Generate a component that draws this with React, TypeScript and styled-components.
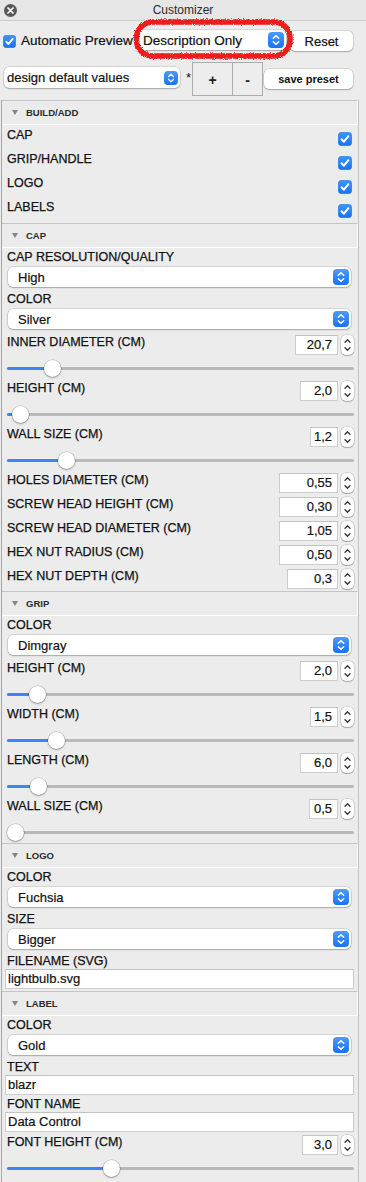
import React from 'react';
import styled, { createGlobalStyle } from 'styled-components';

const GlobalStyle = createGlobalStyle`
  * { box-sizing: border-box; }
  html, body { margin: 0; padding: 0; background: #ececec; }
  body {
    font-family: "Liberation Sans", Arial, sans-serif;
    color: #111;
  }
`;

const Window = styled.div`
  width: 366px;
  height: 1182px;
  display: flex;
  flex-direction: column;
  overflow: hidden;
  background: #ececec;
`;

const TitleBar = styled.div`
  flex: none;
  height: 21px;
  display: grid;
  grid-template-columns: 20px 1fr 20px;
  align-items: center;
  background: #e6e6e6;
  border-bottom: 1px solid #cdcdcd;
`;

const CloseButton = styled.div`
  width: 13px;
  height: 13px;
  margin-left: 3.5px;
  border-radius: 50%;
  background: #585858;
  display: flex;
  align-items: center;
  justify-content: center;
`;

const Title = styled.div`
  text-align: center;
  font-size: 12px;
  color: #2b2b2b;
`;

const Toolbar = styled.div`
  position: relative;
  flex: none;
  display: flex;
  flex-direction: column;
  gap: 11px;
  padding: 9px 13px 4px 3px;
`;

const ToolRow = styled.div<{ $h: number }>`
  display: flex;
  align-items: flex-start;
  height: ${p => p.$h}px;
`;

const ToolLabel = styled.span`
  margin-left: 5px;
  font-size: 13.5px;
  line-height: 21px;
  white-space: nowrap;
  -webkit-text-stroke: 0.2px #111;
`;

const Popup = styled.div<{ $w?: number; $h?: number; $pl?: number; $fs?: number; $mt?: number; $ml?: string }>`
  display: flex;
  align-items: center;
  justify-content: space-between;
  ${p => (p.$w ? `width: ${p.$w}px; flex: none;` : '')}
  height: ${p => p.$h ?? 20}px;
  margin-top: ${p => p.$mt ?? 0}px;
  margin-left: ${p => p.$ml ?? '0'};
  padding: 0 2.5px 0 ${p => p.$pl ?? 10}px;
  background: #fff;
  border-radius: 5px;
  box-shadow: 0 0 0 0.5px rgba(0, 0, 0, 0.2), 0 1px 1.5px rgba(0, 0, 0, 0.22);
  font-size: ${p => p.$fs ?? 13}px;
  white-space: nowrap;
  -webkit-text-stroke: 0.2px #111;
`;

const ChevronBox = styled.span<{ $s: number }>`
  flex: none;
  width: ${p => p.$s}px;
  height: ${p => p.$s}px;
  border-radius: 4px;
  background: linear-gradient(#4b9cfb, #1a72f0);
  display: flex;
  align-items: center;
  justify-content: center;
`;

const PushButton = styled.div<{ $w: number; $mt: number; $ml: number; $fs: number; $bold?: boolean }>`
  flex: none;
  width: ${p => p.$w}px;
  height: 20px;
  margin-top: ${p => p.$mt}px;
  margin-left: ${p => p.$ml}px;
  display: flex;
  align-items: center;
  justify-content: center;
  background: #fff;
  border-radius: 5px;
  box-shadow: 0 0 0 0.5px rgba(0, 0, 0, 0.2), 0 1px 1.5px rgba(0, 0, 0, 0.22);
  font-size: ${p => p.$fs}px;
  font-weight: ${p => (p.$bold ? 700 : 400)};
  -webkit-text-stroke: ${p => (p.$bold ? '0' : '0.2px #111')};
`;

const Star = styled.span`
  flex: none;
  width: 6px;
  margin: 9px 0 0 6px;
  font-size: 13px;
  line-height: 13px;
`;

const SegmentBox = styled.div`
  flex: none;
  width: 71px;
  height: 34px;
  display: grid;
  grid-template-columns: 39px 1fr;
  border: 1px solid #adadad;
  background: #ededed;
`;

const SegmentCell = styled.div<{ $divider?: boolean }>`
  display: flex;
  align-items: center;
  justify-content: center;
  padding-top: 2px;
  font-size: 14px;
  font-weight: 700;
  color: #222;
  border-left: ${p => (p.$divider ? '1px solid #adadad' : 'none')};
`;

const Scribble = styled.svg`
  position: absolute;
  left: 128px;
  top: -6px;
  overflow: visible;
  pointer-events: none;
`;

const ScrollArea = styled.div`
  flex: 1;
  margin: 0 7px 0 1px;
  border-left: 1px solid #a5a5a5;
  border-right: 1px solid #c2c2c2;
  overflow: hidden;
`;

const SectionHeader = styled.div`
  height: 25px;
  display: flex;
  align-items: center;
  padding-left: 10px;
  background: #ebebeb;
  border-top: 1px solid #c4c4c4;
  border-bottom: 1px solid #fff;
  border-right: 1px solid #fff;
`;

const Disclosure = styled.span`
  width: 0;
  height: 0;
  border-left: 3.5px solid transparent;
  border-right: 3.5px solid transparent;
  border-top: 5px solid #858585;
`;

const SectionTitle = styled.span`
  margin-left: 8px;
  font-size: 9.5px;
  font-weight: 700;
  color: #2a2a2a;
`;

const CheckList = styled.div`
  padding-top: 2px;
`;

const CheckRow = styled.div`
  height: 24px;
  display: flex;
  justify-content: space-between;
  align-items: flex-start;
  padding: 0 6px 0 5px;
`;

const CheckLabel = styled.span`
  font-size: 12.5px;
  line-height: 16px;
  -webkit-text-stroke: 0.25px #111;
`;

const CheckSlot = styled.span<{ $mt: number; $size: number }>`
  flex: none;
  display: flex;
  width: ${p => p.$size}px;
  height: ${p => p.$size}px;
  margin-top: ${p => p.$mt}px;
`;

const SectionBody = styled.div`
  display: flex;
  flex-direction: column;
  padding: 2px 4px 2px 3px;
`;

const FieldLabel = styled.div<{ $mt: number }>`
  margin-top: ${p => p.$mt}px;
  padding-left: 2px;
  font-size: 12.5px;
  line-height: 15px;
  white-space: nowrap;
  -webkit-text-stroke: 0.25px #111;
`;

const SelectWrap = styled.div`
  padding: 2px 3px 2px 3px;
`;

const NumberRow = styled.div<{ $mt: number }>`
  display: flex;
  align-items: flex-start;
  height: 20px;
  margin-top: ${p => p.$mt}px;
`;

const NumLabel = styled.span`
  flex: 1;
  padding-left: 2px;
  font-size: 12.5px;
  line-height: 14px;
  white-space: nowrap;
  -webkit-text-stroke: 0.25px #111;
`;

const NumberBox = styled.div<{ $w: number }>`
  flex: none;
  width: ${p => p.$w}px;
  height: 20px;
  padding-right: 5px;
  text-align: right;
  font-size: 13px;
  line-height: 18px;
  background: #fff;
  border: 1px solid #cdcdcd;
  border-top-color: #c2c2c2;
  -webkit-text-stroke: 0.2px #111;
`;

const Spinner = styled.div`
  flex: none;
  width: 13px;
  height: 20px;
  margin-left: 3px;
  display: flex;
  background: #fff;
  border-radius: 5px;
  box-shadow: 0 0 0 0.5px rgba(0, 0, 0, 0.22), 0 1px 1px rgba(0, 0, 0, 0.2);
`;

const SliderRow = styled.div`
  position: relative;
  height: 18px;
  margin: 4px 0 0 2px;
`;

const Track = styled.div`
  position: absolute;
  left: 0;
  right: 0;
  top: 7.5px;
  height: 3px;
  border-radius: 2px;
  background: #b9b9b9;
`;

const Fill = styled.div`
  position: absolute;
  left: 0;
  top: 7.5px;
  height: 3px;
  border-radius: 2px;
  background: #3a86f4;
`;

const Thumb = styled.div`
  position: absolute;
  top: 0.5px;
  width: 17px;
  height: 17px;
  border-radius: 50%;
  background: #fff;
  box-shadow: 0 0 0 0.5px rgba(0, 0, 0, 0.25), 0 1px 2px rgba(0, 0, 0, 0.3);
`;

const TextField = styled.div`
  height: 20px;
  padding-left: 2px;
  font-size: 13px;
  line-height: 18px;
  background: #fff;
  border: 1px solid #cdcdcd;
  border-top-color: #c2c2c2;
  -webkit-text-stroke: 0.2px #111;
`;

type Kind = 'select' | 'number' | 'text';
type Item = { kind: Kind; label: string; value: string; w?: number; thumb?: number };
type Section = { title: string; checks?: string[]; items?: Item[] };

// thumb = offset of the slider knob's left edge from the track start
const sections: Section[] = [
  { title: 'BUILD/ADD', checks: ['CAP', 'GRIP/HANDLE', 'LOGO', 'LABELS'] },
  {
    title: 'CAP',
    items: [
      { kind: 'select', label: 'CAP RESOLUTION/QUALITY', value: 'High' },
      { kind: 'select', label: 'COLOR', value: 'Silver' },
      { kind: 'number', label: 'INNER DIAMETER (CM)', value: '20,7', w: 43, thumb: 37 },
      { kind: 'number', label: 'HEIGHT (CM)', value: '2,0', w: 38, thumb: 5 },
      { kind: 'number', label: 'WALL SIZE (CM)', value: '1,2', w: 28, thumb: 50.5 },
      { kind: 'number', label: 'HOLES DIAMETER (CM)', value: '0,55', w: 59 },
      { kind: 'number', label: 'SCREW HEAD HEIGHT (CM)', value: '0,30', w: 59 },
      { kind: 'number', label: 'SCREW HEAD DIAMETER (CM)', value: '1,05', w: 59 },
      { kind: 'number', label: 'HEX NUT RADIUS (CM)', value: '0,50', w: 59 },
      { kind: 'number', label: 'HEX NUT DEPTH (CM)', value: '0,3', w: 51 },
    ],
  },
  {
    title: 'GRIP',
    items: [
      { kind: 'select', label: 'COLOR', value: 'Dimgray' },
      { kind: 'number', label: 'HEIGHT (CM)', value: '2,0', w: 38, thumb: 21.5 },
      { kind: 'number', label: 'WIDTH (CM)', value: '1,5', w: 28, thumb: 40.5 },
      { kind: 'number', label: 'LENGTH (CM)', value: '6,0', w: 38, thumb: 22.5 },
      { kind: 'number', label: 'WALL SIZE (CM)', value: '0,5', w: 29, thumb: 0 },
    ],
  },
  {
    title: 'LOGO',
    items: [
      { kind: 'select', label: 'COLOR', value: 'Fuchsia' },
      { kind: 'select', label: 'SIZE', value: 'Bigger' },
      { kind: 'text', label: 'FILENAME (SVG)', value: 'lightbulb.svg' },
    ],
  },
  {
    title: 'LABEL',
    items: [
      { kind: 'select', label: 'COLOR', value: 'Gold' },
      { kind: 'text', label: 'TEXT', value: 'blazr' },
      { kind: 'text', label: 'FONT NAME', value: 'Data Control' },
      { kind: 'number', label: 'FONT HEIGHT (CM)', value: '3,0', w: 36, thumb: 96 },
    ],
  },
];

function CheckIcon({ size }: { size: number }) {
  return (
    <svg width={size} height={size} viewBox="0 0 14 14">
      <defs>
        <linearGradient id="cbFill" x1="0" y1="0" x2="0" y2="1">
          <stop offset="0" stopColor="#3f95f9" />
          <stop offset="1" stopColor="#1a72ef" />
        </linearGradient>
      </defs>
      <rect x="0.25" y="0.25" width="13.5" height="13.5" rx="3.5" fill="url(#cbFill)" stroke="#1667d6" strokeWidth="0.5" />
      <path d="M3.6 7.3 L5.9 9.7 L10.4 4.2" fill="none" stroke="#fff" strokeWidth="2" strokeLinecap="round" strokeLinejoin="round" />
    </svg>
  );
}

function UpDown({ size }: { size: number }) {
  return (
    <ChevronBox $s={size}>
      <svg width={size} height={size} viewBox="0 0 16 16">
        <path d="M5.3 6.3 L8 3.7 L10.7 6.3 M5.3 9.7 L8 12.3 L10.7 9.7" fill="none" stroke="#fff" strokeWidth="1.5" strokeLinecap="round" strokeLinejoin="round" />
      </svg>
    </ChevronBox>
  );
}

function SpinArrows() {
  return (
    <Spinner>
      <svg width="13" height="20" viewBox="0 0 13 20">
        <path d="M4 7.3 L6.5 4.8 L9 7.3 M4 12.7 L6.5 15.2 L9 12.7" fill="none" stroke="#333" strokeWidth="1.3" strokeLinecap="round" strokeLinejoin="round" />
      </svg>
    </Spinner>
  );
}

function Slider({ thumb }: { thumb: number }) {
  return (
    <SliderRow>
      <Track />
      <Fill style={{ width: thumb + 8.5 }} />
      <Thumb style={{ left: thumb }} />
    </SliderRow>
  );
}

function labelGap(prev?: Kind) {
  if (!prev) return 0;
  return prev === 'text' ? 2 : 3;
}

function numberGap(prev?: Kind) {
  if (!prev) return 0;
  return prev === 'text' ? 3 : 4;
}

function Field({ item, prev }: { item: Item; prev?: Kind }) {
  if (item.kind === 'select') {
    return (
      <>
        <FieldLabel $mt={labelGap(prev)}>{item.label}</FieldLabel>
        <SelectWrap>
          <Popup>
            {item.value}
            <UpDown size={16} />
          </Popup>
        </SelectWrap>
      </>
    );
  }
  if (item.kind === 'text') {
    return (
      <>
        <FieldLabel $mt={labelGap(prev)}>{item.label}</FieldLabel>
        <TextField>{item.value}</TextField>
      </>
    );
  }
  return (
    <>
      <NumberRow $mt={numberGap(prev)}>
        <NumLabel>{item.label}</NumLabel>
        <NumberBox $w={item.w ?? 40}>{item.value}</NumberBox>
        <SpinArrows />
      </NumberRow>
      {item.thumb !== undefined && <Slider thumb={item.thumb} />}
    </>
  );
}

export default function App() {
  return (
    <Window>
      <GlobalStyle />
      <TitleBar>
        <CloseButton>
          <svg width="7" height="7" viewBox="0 0 7 7">
            <path d="M1 1 L6 6 M6 1 L1 6" stroke="#fff" strokeWidth="1.7" strokeLinecap="round" />
          </svg>
        </CloseButton>
        <Title>Customizer</Title>
      </TitleBar>

      <Toolbar>
        <ToolRow $h={21}>
          <CheckSlot $mt={5} $size={13}>
            <CheckIcon size={13} />
          </CheckSlot>
          <ToolLabel>Automatic Preview</ToolLabel>
          <Popup $w={148} $pl={5} $fs={13.5} $ml="auto">
            Description Only
            <UpDown size={16} />
          </Popup>
          <PushButton $w={63} $mt={1} $ml={4} $fs={13}>Reset</PushButton>
        </ToolRow>
        <ToolRow $h={34}>
          <Popup $w={176} $h={21} $pl={3} $mt={5} $ml="1px">
            design default values
            <UpDown size={14} />
          </Popup>
          <Star>*</Star>
          <SegmentBox>
            <SegmentCell>+</SegmentCell>
            <SegmentCell $divider>-</SegmentCell>
          </SegmentBox>
          <PushButton $w={89} $mt={7} $ml={1} $fs={11} $bold>save preset</PushButton>
        </ToolRow>
        <Scribble width="170" height="50" viewBox="0 0 170 50">
          <defs>
            <filter id="rough" x="-10%" y="-40%" width="120%" height="180%">
              <feTurbulence type="fractalNoise" baseFrequency="0.9" numOctaves="2" seed="4" result="noise" />
              <feDisplacementMap in="SourceGraphic" in2="noise" scale="3.5" xChannelSelector="R" yChannelSelector="G" />
            </filter>
          </defs>
          <rect x="8.5" y="7" width="153.5" height="34" rx="16" fill="none" stroke="#ee1a1a" strokeWidth="5.5" filter="url(#rough)" />
        </Scribble>
      </Toolbar>

      <ScrollArea>
        {sections.map(section => (
          <div key={section.title}>
            <SectionHeader>
              <Disclosure />
              <SectionTitle>{section.title}</SectionTitle>
            </SectionHeader>
            {section.checks ? (
              <CheckList>
                {section.checks.map(name => (
                  <CheckRow key={name}>
                    <CheckLabel>{name}</CheckLabel>
                    <CheckSlot $mt={5} $size={14}>
                      <CheckIcon size={14} />
                    </CheckSlot>
                  </CheckRow>
                ))}
              </CheckList>
            ) : (
              <SectionBody>
                {section.items?.map((item, i) => (
                  <Field key={item.label + i} item={item} prev={i > 0 ? section.items![i - 1].kind : undefined} />
                ))}
              </SectionBody>
            )}
          </div>
        ))}
      </ScrollArea>
    </Window>
  );
}
